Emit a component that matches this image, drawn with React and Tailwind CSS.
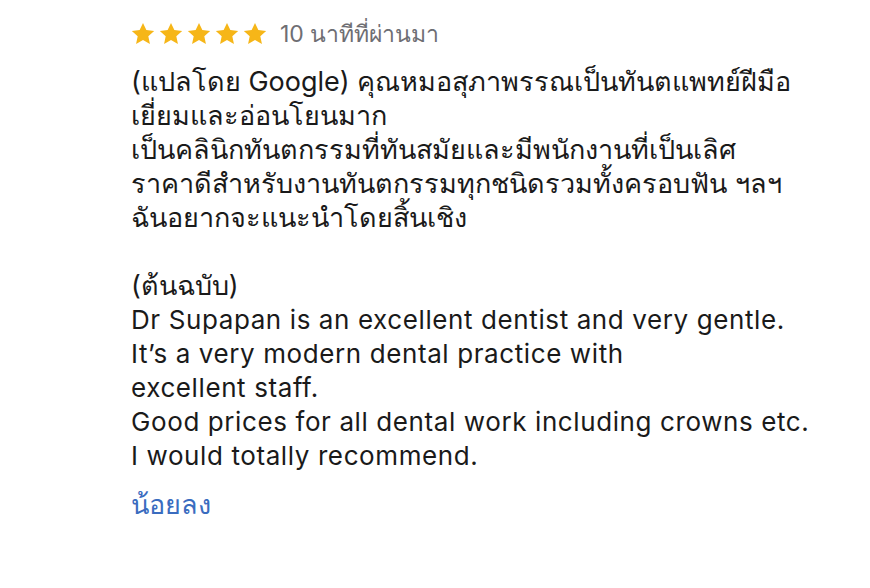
import React from 'react';

const Star = () => (
  <svg viewBox="0 0 24 24" className="w-[26px] h-[26px]" fill="#f6b618">
    <path d="M12 1.8l3.1 6.6 7.2.8-5.4 4.9 1.5 7.1L12 17.6l-6.4 3.6 1.5-7.1L1.7 9.2l7.2-.8z" />
  </svg>
);

const thai = [
  '(แปลโดย Google) คุณหมอสุภาพรรณเป็นทันตแพทย์ฝีมือ',
  'เยี่ยมและอ่อนโยนมาก',
  'เป็นคลินิกทันตกรรมที่ทันสมัยและมีพนักงานที่เป็นเลิศ',
  'ราคาดีสำหรับงานทันตกรรมทุกชนิดรวมทั้งครอบฟัน ฯลฯ',
  'ฉันอยากจะแนะนำโดยสิ้นเชิง',
];

const original = [
  'Dr Supapan is an excellent dentist and very gentle.',
  'It’s a very modern dental practice with',
  'excellent staff.',
  'Good prices for all dental work including crowns etc.',
  'I would totally recommend.',
];

export default function App() {
  return (
    <div
      className="w-[870px] h-[588px] bg-white pl-[131px] pt-[20px] text-[#1a1a1a]"
      style={{ fontFamily: 'Inter, "Liberation Sans", sans-serif' }}
    >
      {/* Rating + time */}
      <div className="flex items-center h-[28px]">
        <div className="flex gap-[2px] -ml-[1px]">
          <Star /><Star /><Star /><Star /><Star />
        </div>
        <span className="ml-[12px] text-[23px] text-[#6e6e73]">10 นาทีที่ผ่านมา</span>
      </div>

      {/* Review body */}
      <div className="mt-[17px] leading-[34px]">
        <div className="text-[27px]">
          {thai.map((l) => (
            <div key={l}>{l}</div>
          ))}
        </div>
        <div className="h-[34px]" />
        <div className="text-[27px]">(ต้นฉบับ)</div>
        <div className="text-[26px] tracking-[0.6px]">
          {original.map((l) => (
            <div key={l}>{l}</div>
          ))}
        </div>
      </div>

      <div className="mt-[12px] text-[27px] text-[#3a6cbf]">น้อยลง</div>
    </div>
  );
}
